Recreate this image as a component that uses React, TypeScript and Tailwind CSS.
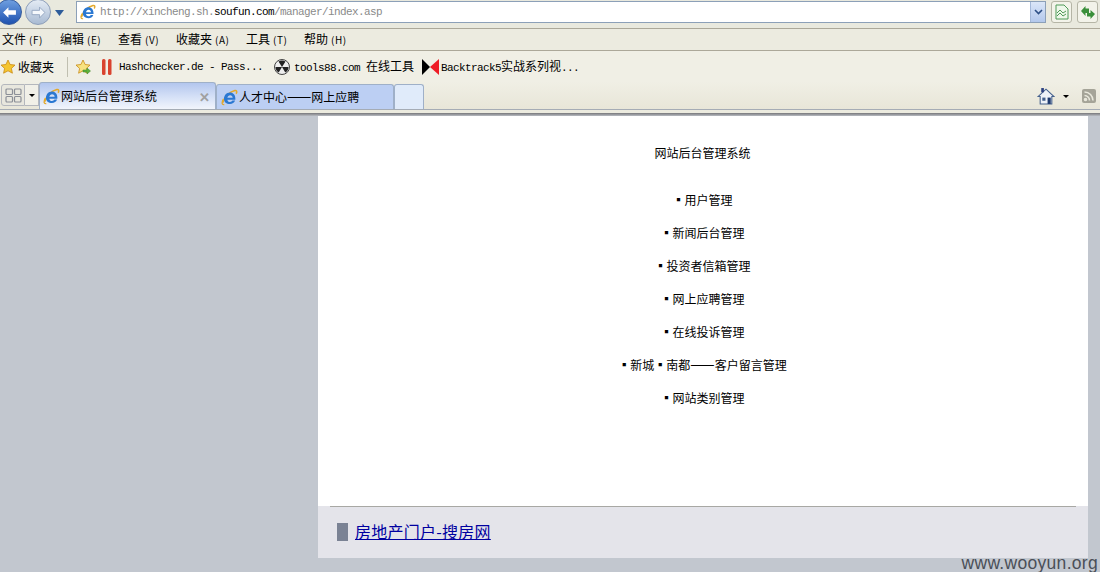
const CJK = "font-['Noto_Sans_CJK_SC','Liberation_Sans',sans-serif]";
const MONO = "font-['Liberation_Mono','Noto_Sans_CJK_SC',monospace]";

const MENU = [
  { label: "文件", key: "F", w: "w-[58px]" },
  { label: "编辑", key: "E", w: "w-[58px]" },
  { label: "查看", key: "V", w: "w-[58px]" },
  { label: "收藏夹", key: "A", w: "w-[70px]" },
  { label: "工具", key: "T", w: "w-[58px]" },
  { label: "帮助", key: "H", w: "w-[58px]" },
];

const LINKS = ["用户管理", "新闻后台管理", "投资者信箱管理", "网上应聘管理", "在线投诉管理", "新城▪南都——客户留言管理", "网站类别管理"];

// the dashes come out short in Noto, size them up to full width
function Dashed({ text }: { text: string }) {
  const parts = text.split("——");
  if (parts.length < 2) return <>{text}</>;
  return (
    <>
      {parts[0]}
      <span className="text-[14.5px] leading-none">——</span>
      {parts[1]}
    </>
  );
}

function IeIcon({ size = 16 }: { size?: number }) {
  return (
    <svg width={size} height={size} viewBox="0 0 16 16" className="shrink-0">
      <path d="M1.500 13C3 7.500 8 2.800 13 1.500c1.800-.3 2.400 1 1.200 3" fill="none" stroke="#e3a92c" strokeWidth="1.500" />
      <path d="M2.800 9.300C2.800 5.800 5.200 3.200 8.400 3.200c3.100 0 5.100 2.300 5.100 5.700v1.100H6c.2 1.400 1.100 2.200 2.500 2.200 1 0 1.800-.4 2.300-1.300h2.500c-.8 2.100-2.600 3.300-4.900 3.300-3.300 0-5.600-2-5.600-4.900zM6 8.200h5c-.1-1.400-1-2.400-2.400-2.400-1.300 0-2.300.9-2.600 2.400z" fill="#2a78d2" />
      <path d="M2.200 9.500c-1.900 3.500-1.500 5.600.9 5.200" fill="none" stroke="#e3a92c" strokeWidth="1.200" />
    </svg>
  );
}

function Star({ arrow }: { arrow?: boolean }) {
  return (
    <svg width="16" height="16" viewBox="0 0 16 16" className="shrink-0">
      <path d="M8 1l2.100 4.500 4.900.6-3.600 3.300 1 4.800L8 11.800l-4.400 2.400 1-4.800L1 6.100l4.900-.6z" fill={arrow ? "#f7e27f" : "#f5c52e"} stroke="#c98a14" strokeWidth="0.800" />
      {arrow && <path d="M8 11h4V9l3.500 3-3.500 3v-2H8z" fill="#5db23c" stroke="#3a8524" strokeWidth="0.500" />}
    </svg>
  );
}

function Toolbar() {
  return (
    <div className={`h-[116px] flex flex-col bg-[#ecebdf] ${CJK}`}>
      {/* address row */}
      <div className="h-[29px] flex items-start bg-[#e9e9de] border-b border-[#aca899]">
        <div className="relative w-[53px] h-[28px] shrink-0 overflow-hidden">
          <div className="absolute left-[-4px] top-[-1px] w-[26px] h-[26px] rounded-full bg-gradient-to-b from-[#6f9fe0] to-[#1f52b0] border border-[#345a9c] flex items-center justify-center">
            <svg width="15" height="13" viewBox="0 0 14 12"><path d="M1 6l5-5v3h7v4H6v3z" fill="#fff" /></svg>
          </div>
          <div className="absolute left-[25px] top-[-1px] w-[26px] h-[26px] rounded-full bg-gradient-to-b from-[#e4ebf4] to-[#a9bbd3] border border-[#8c9db8] flex items-center justify-center">
            <svg width="15" height="13" viewBox="0 0 14 12"><path d="M13 6L8 1v3H1v4h7v3z" fill="#f5f8fc" stroke="#8fa2bd" strokeWidth="0.800" /></svg>
          </div>
        </div>
        <svg width="9" height="6" viewBox="0 0 9 6" className="ml-[2px] mt-[10px] shrink-0"><path d="M0 0h9L4.500 6z" fill="#2d5c9a" /></svg>
        <div className="ml-[12px] mt-[1px] w-[970px] h-[22px] shrink-0 flex items-center bg-white border border-[#8ca0b8] pl-[3px]">
          <IeIcon />
          <span className={`ml-[4px] text-[11px] tracking-[-0.6px] text-[#8a8a8a] whitespace-nowrap ${MONO}`}>
            http://xincheng.sh.<span className="text-black">soufun.com</span>/manager/index.asp
          </span>
          <div className="ml-auto w-[15px] h-[20px] bg-gradient-to-b from-[#dbe6f8] to-[#b3c8ec] border-l border-[#a4b8d8] flex items-center justify-center">
            <svg width="9" height="6" viewBox="0 0 9 6"><path d="M1 1l3.500 3.500L8 1" fill="none" stroke="#2d4f86" strokeWidth="1.600" /></svg>
          </div>
        </div>
        <div className="ml-[5px] mt-[1px] w-[21px] h-[22px] shrink-0 rounded-[3px] border border-[#b5b5a6] bg-[#f3f3ea] flex items-center justify-center">
          <svg width="14" height="16" viewBox="0 0 14 16"><path d="M1 1h8l4 4v10H1z" fill="#eef7ea" stroke="#4f9a58" /><path d="M2 9l3-3 3 3 3-2M2 12l3-3 3 3 3-2" fill="none" stroke="#4f9a58" /></svg>
        </div>
        <div className="ml-[5px] mt-[1px] w-[21px] h-[22px] shrink-0 rounded-[3px] border border-[#b5b5a6] bg-[#f3f3ea] flex items-center justify-center">
          <svg width="16" height="15" viewBox="0 0 16 15"><path d="M1 6l4.500-5v2.500H9V8H5.500v3z" fill="#3a8f3a" /><path d="M15 9l-4.500 5v-2.500H7V8h3.500V5z" fill="#3a8f3a" /></svg>
        </div>
      </div>

      {/* menu row */}
      <div className="h-[22px] flex items-center pl-[2px] pb-[2px] text-[12px] leading-none text-black border-b border-[#aca899] bg-[#ecebe0]">
        {MENU.map((m) => (
          <span key={m.key} className={`${m.w} whitespace-nowrap`}>
            {m.label}
            <span className="text-[10px] ml-[3px] tracking-[0.5px]">({m.key})</span>
          </span>
        ))}
      </div>

      {/* favorites row */}
      <div className="h-[31px] flex items-center text-[12px] text-black bg-[#f0efe5]">
        <Star />
        <span className="ml-[2px] w-[49px]">收藏夹</span>
        <div className="w-px h-[20px] bg-[#c0bfb0] mr-[7px]" />
        <Star arrow />
        <svg width="10" height="16" viewBox="0 0 10 16" className="ml-[11px] shrink-0">
          <rect x="0" y="0" width="3.500" height="16" rx="1.500" fill="#d9432f" />
          <rect x="6" y="0" width="3.500" height="16" rx="1.500" fill="#d9432f" />
        </svg>
        <span className={`ml-[7px] mt-[2px] w-[155px] text-[11px] tracking-[-0.6px] whitespace-nowrap ${MONO}`}>Hashchecker.de - Pass...</span>
        <svg width="16" height="16" viewBox="0 0 16 16" className="shrink-0">
          <circle cx="8" cy="8" r="7.500" fill="#eee" stroke="#444" />
          <path d="M8 8L4.500 2.500A6.500 6.500 0 0 1 11.500 2.500zM8 8l6.500 0A6.500 6.500 0 0 1 11.300 13.600zM8 8L4.700 13.600A6.500 6.500 0 0 1 1.500 8z" fill="#222" />
        </svg>
        <span className={`ml-[4px] w-[128px] whitespace-nowrap ${MONO}`}>
          <span className="text-[11px] tracking-[-0.6px]">tools88.com </span>
          <span className={`${CJK}`}>在线工具</span>
        </span>
        <svg width="17" height="16" viewBox="0 0 17 16" className="shrink-0">
          <path d="M0 0l8 8-8 8z" fill="#000" />
          <path d="M17 0L8 8l9 8z" fill="#ee1c25" />
        </svg>
        <span className={`ml-[2px] text-[11px] tracking-[-0.6px] whitespace-nowrap ${MONO}`}>
          Backtrack5<span className={`text-[12px] tracking-normal ${CJK}`}>实战系列视</span>...
        </span>
      </div>

      {/* tab row */}
      <div className="h-[28px] flex items-end text-[12px] text-black bg-gradient-to-b from-[#f0efe5] to-[#e8e6d8] border-b border-[#a5acb5]">
        <div className="w-[24px] h-[22px] mb-[3px] ml-[1px] shrink-0 bg-[#e8e7de] border border-[#b4b7bd] rounded-l-[3px] flex items-center justify-center">
          <svg width="17" height="15" viewBox="0 0 17 15" fill="none" stroke="#8b8f97" strokeWidth="1.200">
            <rect x="1" y="1" width="6.500" height="5.500" rx="1" />
            <rect x="9.500" y="1" width="6.500" height="5.500" rx="1" />
            <rect x="1" y="8.500" width="6.500" height="5.500" rx="1" />
            <rect x="9.500" y="8.500" width="6.500" height="5.500" rx="1" />
          </svg>
        </div>
        <div className="w-[14px] h-[22px] mb-[3px] shrink-0 bg-[#f1f0e8] border-y border-r border-[#b4b7bd] flex items-center justify-center">
          <svg width="6" height="3" viewBox="0 0 6 3"><path d="M0 0h6L3 3z" fill="#000" /></svg>
        </div>
        <div className="w-[177px] h-[27px] shrink-0 rounded-t-[3px] border border-b-0 border-[#9fb0c8] bg-gradient-to-b from-[#b3c6ee] via-[#d3dff6] to-[#f2f5fc] flex items-center pl-[3px]">
          <IeIcon size={17} />
          <span className="ml-[1px]">网站后台管理系统</span>
          <span className="ml-auto mr-[5px] text-[13px] font-bold leading-none text-[#a0a0a0]">✕</span>
        </div>
        <div className="w-[178px] h-[25px] shrink-0 rounded-t-[3px] border border-b-0 border-[#9fb0c8] bg-[#bccff3] flex items-center pl-[4px]">
          <IeIcon size={17} />
          <span className="ml-[1px]"><Dashed text="人才中心——网上应聘" /></span>
        </div>
        <div className="w-[30px] h-[25px] shrink-0 rounded-t-[3px] border border-b-0 border-[#9fb0c8] bg-[#e0ebfa]" />
        <div className="ml-auto mb-[4px] flex items-center pr-[4px]">
          <svg width="18" height="18" viewBox="0 0 17 17">
            <path d="M1 9l7.500-7L16 9h-2v7H3V9z" fill="#eef2f8" stroke="#44608c" />
            <rect x="4" y="1" width="2.500" height="4" fill="#2a3f7f" />
            <rect x="5" y="10" width="3" height="3" fill="#44608c" />
            <rect x="10" y="10" width="3" height="6" fill="#1f3a6e" />
          </svg>
          <svg width="6" height="3" viewBox="0 0 6 3" className="ml-[8px]"><path d="M0 0h6L3 3z" fill="#000" /></svg>
          <div className="ml-[13px] w-[14px] h-[14px] rounded-[2px] bg-[#a5a498] relative overflow-hidden">
            <svg width="14" height="14" viewBox="0 0 14 14" fill="none" stroke="#e9e8dc" strokeWidth="1.600">
              <circle cx="3.500" cy="10.500" r="1" fill="#e9e8dc" />
              <path d="M2.500 6.500a5 5 0 0 1 5 5M2.500 3a8.500 8.500 0 0 1 8.500 8.500" />
            </svg>
          </div>
        </div>
      </div>
      <div className="h-[3px]" />
      <div className="h-[3px] bg-gradient-to-b from-[#77777a] to-[#b8bcc2]" />
    </div>
  );
}

export default function App() {
  return (
    <div className="relative w-[1100px] h-[572px] overflow-hidden bg-[#c2c7cf]">
      <Toolbar />
      <div className={`ml-[318px] w-[770px] bg-white text-black text-[12px] ${CJK}`}>
        <div className="h-[390px] flex flex-col items-center pt-[28px]">
          <p className="h-[18px] leading-[18px] -ml-[1px]">网站后台管理系统</p>
          <ul className="mt-[29px] flex flex-col items-center gap-[15px] -ml-[1px]">
            {LINKS.map((l) => (
              <li key={l} className="h-[18px] leading-[18px] whitespace-nowrap">
                <span>▪</span>
                <Dashed text={l} />
              </li>
            ))}
          </ul>
        </div>
        <div className="h-[52px] bg-[#e4e4ea]">
          <div className="mx-[12px] h-px bg-[#a8a8a4]" />
          <div className="flex items-center pl-[19px] pt-[14px]">
            <div className="w-[11px] h-[18px] bg-[#7a8294] mt-[2px]" />
            <a href="#" className="ml-[7px] text-[16px] leading-[20px] tracking-[0.25px] text-[#0000a0] underline">房地产门户-搜房网</a>
          </div>
        </div>
      </div>
      <span className="absolute right-[2px] bottom-[-1px] font-['Liberation_Sans',sans-serif] text-[17.5px] leading-[20px] tracking-[0.3px] text-[#4a4f58]">www.wooyun.org</span>
    </div>
  );
}
